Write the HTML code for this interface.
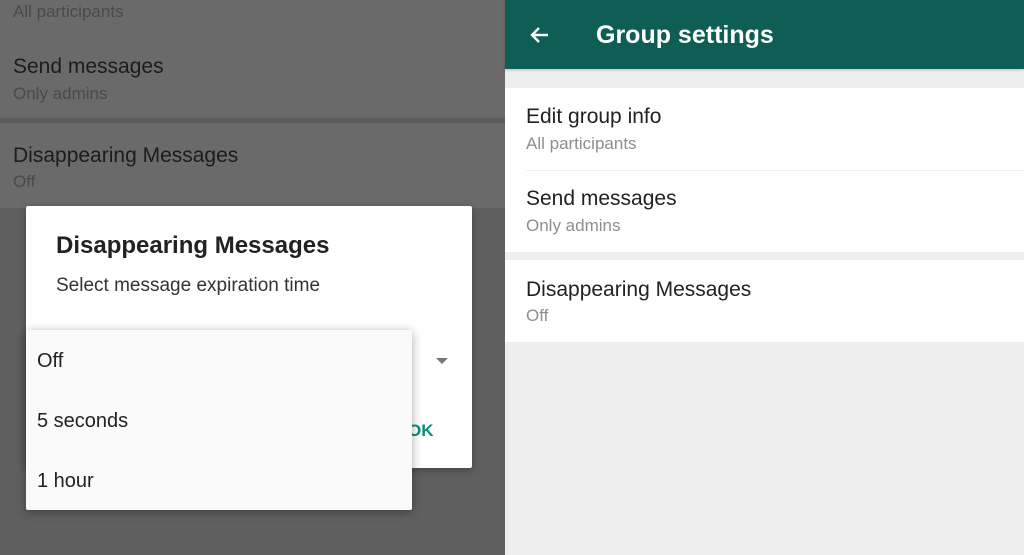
<!DOCTYPE html>
<html><head><style>
*{margin:0;padding:0;box-sizing:border-box}
body{width:1024px;height:555px;overflow:hidden;position:relative;font-family:"Liberation Sans",sans-serif;background:#5f5f5f}
.a{position:absolute;white-space:nowrap}
.t{font-size:21px;color:#222}
.s{font-size:17px;color:#8e8e8e}
.lt{color:#1c1c1c}.ls{color:#4a4a4a}
</style></head><body>
<div class="a" style="left:0;top:0;width:505px;height:208px;background:#6a6a6a"></div>
<div class="a" style="left:0;top:118px;width:505px;height:5px;background:#5c5c5c"></div>
<div class="a t lt" style="left:13px;top:55px">Send messages</div>
<div class="a s ls" style="left:13px;top:2px">All participants</div>
<div class="a s ls" style="left:13px;top:84px">Only admins</div>
<div class="a t lt" style="left:13px;top:144px">Disappearing Messages</div>
<div class="a s ls" style="left:13px;top:172px">Off</div>
<div class="a" style="left:26px;top:206px;width:446px;height:262px;background:#fff;border-radius:2px;box-shadow:0 2px 8px rgba(0,0,0,.3)"></div>
<div class="a" style="left:56px;top:232px;font-size:24px;font-weight:bold;color:#222">Disappearing Messages</div>
<div class="a" style="left:56px;top:275px;font-size:19px;color:#333">Select message expiration time</div>
<div class="a" style="left:436px;top:358px;width:0;height:0;border-left:6px solid transparent;border-right:6px solid transparent;border-top:6px solid #777"></div>
<div class="a" style="left:408px;top:421px;font-size:17px;font-weight:bold;color:#0e8a77">OK</div>
<div class="a" style="left:26px;top:330px;width:386px;height:180px;background:#fafafa;border-radius:2px;box-shadow:0 2px 10px rgba(0,0,0,.35)"></div>
<div class="a" style="left:37px;top:350px;font-size:20px;color:#222">Off</div>
<div class="a" style="left:37px;top:410px;font-size:20px;color:#222">5 seconds</div>
<div class="a" style="left:37px;top:470px;font-size:20px;color:#222">1 hour</div>
<div class="a" style="left:505px;top:0;width:519px;height:555px;background:#eeeeee"></div>
<div class="a" style="left:505px;top:0;width:519px;height:69px;background:#0e5e55;box-shadow:0 1px 3px rgba(0,0,0,.2)"></div>
<svg class="a" style="left:528px;top:23px" width="24" height="24" viewBox="0 0 24 24"><path d="M20 12H5M11 5l-7 7 7 7" stroke="#fff" stroke-width="2.4" fill="none"/></svg>
<div class="a" style="left:596px;top:21px;font-size:25px;font-weight:bold;color:#fff">Group settings</div>
<div class="a" style="left:505px;top:88px;width:519px;height:164px;background:#fff"></div>
<div class="a" style="left:526px;top:170px;width:498px;height:1px;background:#f0f0f0"></div>
<div class="a" style="left:505px;top:260px;width:519px;height:82px;background:#fff"></div>
<div class="a t" style="left:526px;top:105px">Edit group info</div>
<div class="a s" style="left:526px;top:134px">All participants</div>
<div class="a t" style="left:526px;top:187px">Send messages</div>
<div class="a s" style="left:526px;top:216px">Only admins</div>
<div class="a t" style="left:526px;top:278px">Disappearing Messages</div>
<div class="a s" style="left:526px;top:306px">Off</div>
</body></html>
